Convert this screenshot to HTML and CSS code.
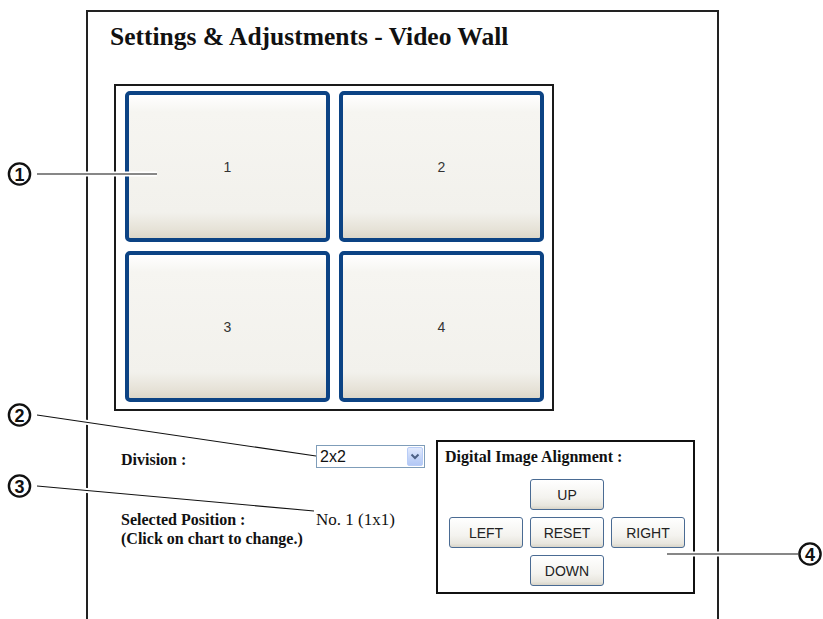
FILE: index.html
```html
<html lang="en">
<head>
    <meta charset="UTF-8">
    <meta name="viewport" content="width=device-width, initial-scale=1.0">
    <title>Settings &amp; Adjustments - Video Wall</title>
    <link rel="stylesheet" href="styles.css">
</head>
<body>
    <div id="frame">
        <h1 class="title">Settings &amp; Adjustments - Video Wall</h1>

        <div class="wall">
            <div class="tile">1</div>
            <div class="tile">2</div>
            <div class="tile">3</div>
            <div class="tile">4</div>
        </div>

        <div class="controls">
            <div class="settings">
                <div class="row division">
                    <span class="label">Division :</span>
                    <div class="select">
                        <span class="select-value">2x2</span>
                        <span class="select-arrow">
                            <svg width="16" height="19" viewBox="0 0 16 19"><path d="M4.5 7.5 L8 11 L11.5 7.5" fill="none" stroke="#4d6185" stroke-width="2"/></svg>
                        </span>
                    </div>
                </div>
                <div class="row position">
                    <div class="label">Selected Position :<br>(Click on chart to change.)</div>
                    <span class="value">No. 1 (1x1)</span>
                </div>
            </div>

            <div class="align-box">
                <div class="align-title">Digital Image Alignment :</div>
                <div class="pad">
                    <button class="btn up">UP</button>
                    <button class="btn left">LEFT</button>
                    <button class="btn reset">RESET</button>
                    <button class="btn right">RIGHT</button>
                    <button class="btn down">DOWN</button>
                </div>
            </div>
        </div>
    </div>

    <!-- callout numbers drawn over the screenshot -->
    <svg class="callouts" width="823" height="619" viewBox="0 0 823 619">
        <g class="halo">
            <path d="M37 174 H157"/>
            <path d="M37 415 L316 456"/>
            <path d="M37 486 L314 511"/>
            <path d="M667 554 H798"/>
        </g>
        <g class="leader">
            <path d="M37 174 H157"/>
            <path d="M37 415 L316 456"/>
            <path d="M37 486 L314 511"/>
            <path d="M667 554 H798"/>
        </g>
        <g class="mark">
            <circle cx="19.5" cy="174" r="10.6"/>
            <text x="19.5" y="180.5">1</text>
            <circle cx="19.5" cy="415" r="10.6"/>
            <text x="19.5" y="421.5">2</text>
            <circle cx="19.5" cy="486" r="10.6"/>
            <text x="19.5" y="492.5">3</text>
            <circle cx="810" cy="554" r="10.6"/>
            <text x="810" y="560.5">4</text>
        </g>
    </svg>
</body>
</html>
```

FILE: styles.css
```css
  body {
      margin: 0;
      padding: 0;
      background-color: #fff;
      overflow: hidden;
      position: relative;
      font-family: "Liberation Serif", "Times New Roman", serif;
      color: #111;
  }
  #frame {
      box-sizing: border-box;
      width: 633px;
      height: 609px;
      margin: 10px 0 0 86px;
      padding: 12px 0 0 22px;
      border: 2px solid #222;
      border-bottom: none;
  }
  .title {
      margin: 0;
      font-size: 25.5px;
      line-height: 25px;
      font-weight: bold;
  }
  .wall {
      box-sizing: border-box;
      width: 440px;
      height: 327px;
      margin: 35px 0 0 4px;
      padding: 5px 8px 7px 9px;
      border: 2px solid #1a1a1a;
      display: grid;
      grid-template-columns: 205px 205px;
      grid-template-rows: 151px 151px;
      gap: 9px;
  }
  .tile {
      box-sizing: border-box;
      border: 4px solid #0c4384;
      border-radius: 5px;
      background: linear-gradient(to bottom, #ffffff 0%, #f6f5f1 12%, #f2f1ec 82%, #e6e2d7 94%, #dcd7c9 100%);
      display: flex;
      align-items: center;
      justify-content: center;
      font-family: "Liberation Sans", Arial, sans-serif;
      font-size: 14px;
      color: #333;
  }
  .controls {
      display: flex;
      align-items: flex-start;
      margin: 29px 0 0 11px;
  }
  .settings {
      width: 315px;
      padding-top: 5px;
  }
  .row {
      display: flex;
      align-items: flex-start;
  }
  .label {
      width: 195px;
      font-size: 16px;
      line-height: 19px;
      font-weight: bold;
  }
  .division .label {
      margin-top: 5px;
  }
  .position {
      margin-top: 41px;
  }
  .value {
      font-size: 17px;
      line-height: 19px;
  }
  .select {
      box-sizing: border-box;
      width: 109px;
      height: 23px;
      border: 1px solid #7f9db9;
      background-color: #fff;
      display: flex;
      align-items: center;
  }
  .select-value {
      flex: 1;
      padding-left: 3px;
      font-family: "Liberation Sans", Arial, sans-serif;
      font-size: 16px;
      color: #111;
  }
  .select-arrow {
      box-sizing: border-box;
      width: 16px;
      height: 19px;
      margin-right: 1px;
      border: 1px solid #b9cdf7;
      border-radius: 2px;
      background: linear-gradient(to bottom, #e2eafd, #c3d4f8 60%, #b3c8f5);
      display: flex;
  }
  .select-arrow svg {
      margin: -1px;
  }
  .align-box {
      box-sizing: border-box;
      width: 259px;
      border: 2px solid #111;
      padding: 5px 8px 6px 11px;
  }
  .align-title {
      margin-left: -4px;
      font-size: 16px;
      line-height: 19px;
      font-weight: bold;
  }
  .pad {
      margin-top: 13px;
      display: grid;
      grid-template-columns: repeat(3, 74px);
      grid-template-rows: repeat(3, 31px);
      gap: 7px;
  }
  .btn {
      margin: 0;
      padding: 0;
      border: 1px solid #4a6b93;
      border-radius: 3px;
      background: linear-gradient(to bottom, #ffffff, #f4f3ef 60%, #e8e6de 88%, #d8d4c8);
      font-family: "Liberation Sans", Arial, sans-serif;
      font-size: 14px;
      color: #222;
  }
  .up {
      grid-area: 1 / 2;
  }
  .left {
      grid-area: 2 / 1;
  }
  .reset {
      grid-area: 2 / 2;
  }
  .right {
      grid-area: 2 / 3;
  }
  .down {
      grid-area: 3 / 2;
  }
  .callouts {
      position: absolute;
      top: 0;
      left: 0;
      pointer-events: none;
  }
  .halo path {
      fill: none;
      stroke: #fff;
      stroke-width: 5;
  }
  .leader path {
      fill: none;
      stroke: #111;
      stroke-width: 1.1;
  }
  .mark circle {
      fill: #fff;
      stroke: #111;
      stroke-width: 2.4;
  }
  .mark text {
      font-family: "Liberation Sans", Arial, sans-serif;
      font-weight: bold;
      font-size: 18px;
      text-anchor: middle;
      fill: #111;
  }
```
